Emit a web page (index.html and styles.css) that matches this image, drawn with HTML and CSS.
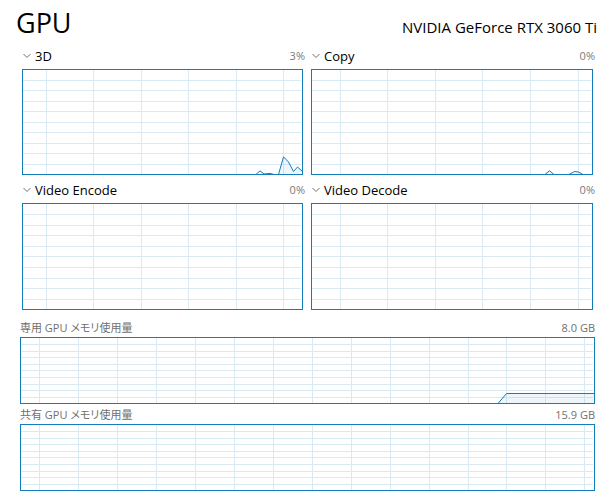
FILE: index.html
```html
<!DOCTYPE html>
<html lang="ja">
<head>
<meta charset="utf-8">
<meta name="viewport" content="width=device-width, initial-scale=1">
<title>GPU</title>
<link rel="stylesheet" href="styles.css">
</head>
<body>
<main>
  <header class="title">
    <h1>GPU</h1>
    <p class="device">NVIDIA GeForce RTX 3060 Ti</p>
  </header>

  <div class="engines">
    <section class="engine">
      <div class="engine-head">
        <button type="button" class="picker"><svg class="chevron" viewBox="0 0 8 6" aria-hidden="true"><path d="M.5 1L4 4.500L7.500 1"/></svg>3D</button>
        <span class="value">3%</span>
      </div>
      <svg class="chart" viewBox="0 0 279 104" role="img" aria-label="3D 3%">
        <path class="grid" d="M23.500 0V104M70.500 0V104M118.500 0V104M165.500 0V104M213.500 0V104M260.500 0V104M0 10.500H278M0 20.500H278M0 31.500H278M0 41.500H278M0 52.500H278M0 62.500H278M0 73.500H278M0 83.500H278M0 94.500H278"/>
        <path class="area" d="M233 104.500L237 100.800L241 104L247 103.400L251 104.500H255.500L260.500 86.800L265.500 92L270.500 101.500L274.500 97L280 102V105H233Z"/>
        <path class="line" d="M233 104.500L237 100.800L241 104L247 103.400L251 104.500H255.500L260.500 86.800L265.500 92L270.500 101.500L274.500 97L280 102"/>
      </svg>
    </section>
    <section class="engine">
      <div class="engine-head">
        <button type="button" class="picker"><svg class="chevron" viewBox="0 0 8 6" aria-hidden="true"><path d="M.5 1L4 4.500L7.500 1"/></svg>Copy</button>
        <span class="value">0%</span>
      </div>
      <svg class="chart" viewBox="0 0 280 104" role="img" aria-label="Copy 0%">
        <path class="grid" d="M28.500 0V104M75.500 0V104M123.500 0V104M170.500 0V104M218.500 0V104M266.500 0V104M0 10.500H279M0 20.500H279M0 31.500H279M0 41.500H279M0 52.500H279M0 62.500H279M0 73.500H279M0 83.500H279M0 94.500H279"/>
        <path class="area" d="M233 104.500L237.500 100.700L242 104.500H257L262.500 101.500L266.500 102L271 104.500Z"/>
        <path class="line" d="M233 104.500L237.500 100.700L242 104.500M257 104.500L262.500 101.500L266.500 102L271 104.500"/>
      </svg>
    </section>
    <section class="engine">
      <div class="engine-head">
        <button type="button" class="picker"><svg class="chevron" viewBox="0 0 8 6" aria-hidden="true"><path d="M.5 1L4 4.500L7.500 1"/></svg>Video Encode</button>
        <span class="value">0%</span>
      </div>
      <svg class="chart" viewBox="0 0 279 105" role="img" aria-label="Video Encode 0%">
        <path class="grid" d="M23.500 0V105M70.500 0V105M118.500 0V105M165.500 0V105M213.500 0V105M260.500 0V105M0 10.500H278M0 21.500H278M0 31.500H278M0 42.500H278M0 52.500H278M0 63.500H278M0 74.500H278M0 84.500H278M0 95.500H278"/>
      </svg>
    </section>
    <section class="engine">
      <div class="engine-head">
        <button type="button" class="picker"><svg class="chevron" viewBox="0 0 8 6" aria-hidden="true"><path d="M.5 1L4 4.500L7.500 1"/></svg>Video Decode</button>
        <span class="value">0%</span>
      </div>
      <svg class="chart" viewBox="0 0 280 105" role="img" aria-label="Video Decode 0%">
        <path class="grid" d="M28.500 0V105M75.500 0V105M123.500 0V105M170.500 0V105M218.500 0V105M266.500 0V105M0 10.500H279M0 21.500H279M0 31.500H279M0 42.500H279M0 52.500H279M0 63.500H279M0 74.500H279M0 84.500H279M0 95.500H279"/>
      </svg>
    </section>
  </div>

  <div class="memory">
    <section>
      <div class="memory-head"><h2>専用 GPU メモリ使用量</h2><span>8.0 GB</span></div>
      <svg class="chart" viewBox="0 0 573 65" role="img" aria-label="専用 GPU メモリ使用量">
        <path class="grid" d="M18.500 0V65M57.500 0V65M96.500 0V65M135.500 0V65M174.500 0V65M213.500 0V65M252.500 0V65M291.500 0V65M330.500 0V65M369.500 0V65M408.500 0V65M447.500 0V65M485.500 0V65M524.500 0V65M563.500 0V65M0 6.500H572M0 13.500H572M0 19.500H572M0 26.500H572M0 32.500H572M0 39.500H572M0 46.500H572M0 52.500H572M0 59.500H572"/>
        <path class="area" d="M477 65.500L485.500 55.500H573V65.500Z"/>
        <path class="line" d="M477 65.500L485.500 55.500H573"/>
      </svg>
    </section>
    <section>
      <div class="memory-head"><h2>共有 GPU メモリ使用量</h2><span>15.9 GB</span></div>
      <svg class="chart" viewBox="0 0 573 65" role="img" aria-label="共有 GPU メモリ使用量">
        <path class="grid" d="M18.500 0V65M57.500 0V65M96.500 0V65M135.500 0V65M174.500 0V65M213.500 0V65M252.500 0V65M291.500 0V65M330.500 0V65M369.500 0V65M408.500 0V65M447.500 0V65M485.500 0V65M524.500 0V65M563.500 0V65M0 6.500H572M0 13.500H572M0 19.500H572M0 26.500H572M0 32.500H572M0 39.500H572M0 46.500H572M0 52.500H572M0 59.500H572"/>
      </svg>
    </section>
  </div>
</main>
</body>
</html>
```
FILE: styles.css
```css
* {
  box-sizing: border-box;
}

body {
  margin: 0;
  background: #fff;
  color: #000;
  font-family: "Open Sans", "Noto Sans CJK JP", sans-serif;
}

h1,
h2,
p {
  margin: 0;
  font-weight: 400;
}

.title {
  display: flex;
  justify-content: space-between;
  align-items: baseline;
  height: 45px;
  padding: 3px 11px 0 16px;
}

h1 {
  font-size: 27px;
  line-height: 40px;
}

.device {
  font-size: 15px;
  line-height: 24px;
}

.engines {
  display: grid;
  grid-template-columns: 283fr 284fr;
  gap: 4px 6px;
  padding: 0 13px 0 22px;
}

.engine-head {
  display: flex;
  justify-content: space-between;
  align-items: center;
  height: 24px;
  padding-bottom: 2px;
}

.picker {
  display: flex;
  align-items: center;
  gap: 4px;
  padding: 0;
  border: 0;
  background: none;
  color: inherit;
  font: inherit;
  font-size: 13px;
  line-height: 22px;
}

.chevron {
  width: 8px;
  height: 6px;
  margin-left: 1px;
  fill: none;
  stroke: #707070;
}

.value {
  color: #7a7a7a;
  font-size: 11px;
  line-height: 22px;
}

.chart {
  display: block;
  width: 100%;
  height: auto;
  border: 1px solid #117dbb;
}

.engine .chart {
  width: calc(100% - 2px);
}

.grid {
  fill: none;
  stroke: #d9eaf4;
  shape-rendering: crispEdges;
}

.area {
  fill: #117dbb;
  fill-opacity: 0.07;
}

.line {
  fill: none;
  stroke: #117dbb;
}

.memory {
  padding: 7px 13px 13px 20px;
}

.memory-head {
  display: flex;
  justify-content: space-between;
  height: 20px;
  color: #707070;
  font-size: 11px;
  line-height: 22px;
}

h2 {
  font-size: 11px;
  font-feature-settings: "palt";
}
```
